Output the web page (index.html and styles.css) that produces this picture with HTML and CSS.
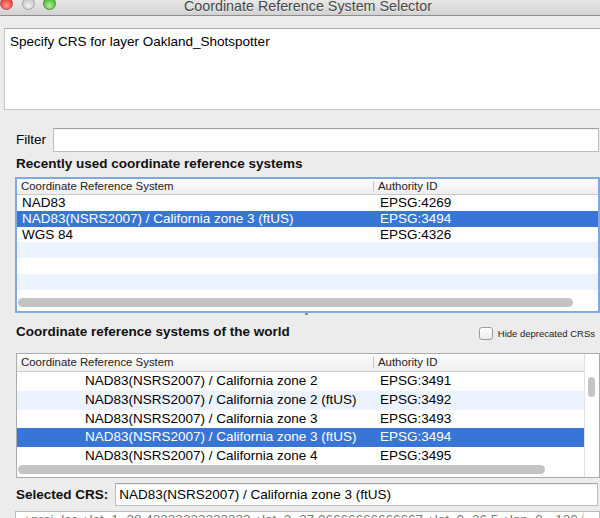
FILE: index.html
```html
<!DOCTYPE html>
<html>
<head>
<meta charset="utf-8">
<title>Coordinate Reference System Selector</title>
<link rel="stylesheet" href="styles.css">
</head>
<body>
<div class="window">
  <div class="titlebar">
    <div class="lights">
      <span class="light red"></span>
      <span class="light grey"></span>
      <span class="light green"></span>
    </div>
    <div class="title">Coordinate Reference System Selector</div>
  </div>

  <div class="desc">Specify CRS for layer Oakland_Shotspotter</div>

  <div class="content">
    <div class="filter-row">
      <span class="label">Filter</span>
      <div class="field"></div>
    </div>

    <div class="heading recent-heading">Recently used coordinate reference systems</div>

    <div class="table recent">
      <div class="thead">
        <span class="h1">Coordinate Reference System</span>
        <span class="sep"></span>
        <span class="h2">Authority ID</span>
      </div>
      <div class="tbody">
        <div class="row"><span class="c1">NAD83</span><span class="c2">EPSG:4269</span></div>
        <div class="row sel"><span class="c1">NAD83(NSRS2007) / California zone 3 (ftUS)</span><span class="c2">EPSG:3494</span></div>
        <div class="row"><span class="c1">WGS 84</span><span class="c2">EPSG:4326</span></div>
        <div class="row alt"></div>
        <div class="row"></div>
        <div class="row alt"></div>
        <div class="row"></div>
      </div>
      <div class="hscroll"><div class="thumb"></div></div>
    </div>

    <div class="splitter"></div>

    <div class="world-head">
      <div class="heading">Coordinate reference systems of the world</div>
      <div class="check"><span class="box"></span><span class="check-label">Hide deprecated CRSs</span></div>
    </div>

    <div class="table world">
      <div class="thead">
        <span class="h1">Coordinate Reference System</span>
        <span class="sep"></span>
        <span class="h2">Authority ID</span>
      </div>
      <div class="tbody">
        <div class="row"><span class="c1">NAD83(NSRS2007) / California zone 2</span><span class="c2">EPSG:3491</span></div>
        <div class="row alt"><span class="c1">NAD83(NSRS2007) / California zone 2 (ftUS)</span><span class="c2">EPSG:3492</span></div>
        <div class="row"><span class="c1">NAD83(NSRS2007) / California zone 3</span><span class="c2">EPSG:3493</span></div>
        <div class="row sel"><span class="c1">NAD83(NSRS2007) / California zone 3 (ftUS)</span><span class="c2">EPSG:3494</span></div>
        <div class="row"><span class="c1">NAD83(NSRS2007) / California zone 4</span><span class="c2">EPSG:3495</span></div>
      </div>
      <div class="hscroll"><div class="thumb"></div></div>
      <div class="vscroll"><div class="thumb"></div></div>
      <div class="corner"></div>
    </div>

    <div class="sel-row">
      <span class="heading sel-label">Selected CRS:</span>
      <div class="field sel-field">NAD83(NSRS2007) / California zone 3 (ftUS)</div>
    </div>

    <div class="proj">
      <div class="proj-text">+proj=lcc +lat_1=38.43333333333333 +lat_2=37.06666666666667 +lat_0=36.5 +lon_0=-120.5 +x_0=2000000.0001016 +y_0=500000.0001016001 +ellps=GRS80 +towgs84=0,0,0,0,0,0,0 +units=us-ft +no_defs</div>
      <div class="proj-scroll"></div>
    </div>
  </div>
</div>
</body>
</html>
```

FILE: styles.css
```css
body {
  margin: 0;
  background: #ececec;
  font-family: "Liberation Sans", Arial, sans-serif;
  color: #000;
}

.window {
  width: 600px;
  height: 518px;
  overflow: hidden;
  background: #ececec;
}

/* title bar */
.titlebar {
  height: 15px;
  border-bottom: 1px solid #8e8e8e;
  background: linear-gradient(#e8e8e8, #d2d2d2);
  display: flex;
  align-items: flex-start;
  overflow: hidden;
}

.lights {
  display: flex;
  margin-top: -3px;
}

.light {
  width: 13px;
  height: 13px;
  border-radius: 50%;
  box-sizing: border-box;
}

.red {
  background: radial-gradient(circle at 50% 70%, #ff9a92 0%, #f0544d 55%, #d3403a 100%);
  border: 1px solid #b9403b;
}

.grey {
  margin-left: 9px;
  background: radial-gradient(circle at 50% 70%, #f2f2f2 0%, #d2d2d2 55%, #b8b8b8 100%);
  border: 1px solid #a4a4a4;
}

.green {
  margin-left: 8px;
  background: radial-gradient(circle at 50% 70%, #b6f09a 0%, #67c64b 55%, #4aa633 100%);
  border: 1px solid #3d932b;
}

.title {
  margin-left: 128px;
  font-size: 14.3px;
  line-height: 12px;
  color: #484848;
  white-space: nowrap;
  text-shadow: 0 1px 0 rgba(255, 255, 255, 0.5);
}

/* description box */
.desc {
  margin: 12px 0 0 4px;
  width: 620px;
  height: 82px;
  box-sizing: border-box;
  padding: 5px 5px;
  background: #fff;
  border: 1px solid #c4c4c4;
  border-top-color: #acacac;
  font-size: 13.5px;
  line-height: 16px;
  white-space: nowrap;
}

.content {
  padding-left: 15px;
}

/* filter */
.filter-row {
  display: flex;
  align-items: center;
  margin-top: 18px;
  height: 24px;
}

.label {
  margin-left: 1px;
  font-size: 13.5px;
  line-height: 16px;
}

.field {
  flex: 1;
  height: 24px;
  margin-left: 7px;
  margin-right: 1px;
  box-sizing: border-box;
  background: #fff;
  border: 1px solid #bcbcbc;
  border-top-color: #a2a2a2;
  box-shadow: inset 0 1px 1px rgba(0, 0, 0, 0.06);
}

.heading {
  font-weight: bold;
  font-size: 13.5px;
  line-height: 16px;
  color: #111;
  white-space: nowrap;
}

.recent-heading {
  margin: 4px 0 0 1px;
}

/* tables */
.table {
  box-sizing: border-box;
  background: #fff;
  overflow: hidden;
}

.recent {
  margin-top: 5px;
  height: 136px;
  border: 2px solid #80a9e3;
  display: flex;
  flex-direction: column;
}

.thead {
  display: flex;
  height: 16px;
  box-sizing: border-box;
  border-bottom: 1px solid #cbcbcb;
  background: linear-gradient(#fdfdfd, #eeeeee);
  font-size: 11.4px;
  line-height: 15px;
  color: #222;
  white-space: nowrap;
}

.thead .h1 {
  width: 356px;
  padding-left: 4px;
  box-sizing: border-box;
}

.thead .sep {
  width: 1px;
  background: #c6c6c6;
  margin: 2px 0 3px;
}

.thead .h2 {
  padding-left: 4px;
}

.tbody {
  overflow: hidden;
}

.recent .tbody {
  height: 100px;
}

.row {
  display: flex;
  height: 15.8px;
  line-height: 15.8px;
  font-size: 13.5px;
  white-space: nowrap;
}

.row .c1 {
  width: 356px;
  flex: none;
  padding-left: 5px;
  box-sizing: border-box;
}

.row .c2 {
  padding-left: 7px;
}

.alt {
  background: #edf3fe;
}

.sel {
  background: #3875d7;
  color: #fff;
}

.hscroll {
  height: 16px;
  box-sizing: border-box;
  padding: 3px 0 0 1px;
  background: #fff;
}

.hscroll .thumb {
  width: 555px;
  height: 9px;
  border-radius: 5px;
  background: #c4c4c4;
}

/* splitter handle */
.splitter {
  height: 0;
  position: relative;
}

.splitter::after {
  content: "";
  position: absolute;
  left: 290px;
  top: 0;
  width: 3px;
  height: 2px;
  background: #8a8a8a;
}

/* world heading */
.world-head {
  display: flex;
  align-items: center;
  justify-content: space-between;
  margin-top: 11px;
  height: 16px;
  padding: 0 5px 0 1px;
}

.check {
  display: flex;
  align-items: center;
  margin-top: 3px;
}

.box {
  width: 14px;
  height: 13px;
  box-sizing: border-box;
  border: 1px solid #9c9c9c;
  border-radius: 3px;
  background: linear-gradient(#ffffff, #ececec);
  margin-right: 5px;
}

.check-label {
  font-size: 9.5px;
  line-height: 12px;
  color: #222;
  white-space: nowrap;
}

/* world table */
.world {
  margin: 13px 0 0 1px;
  height: 125px;
  border: 1px solid #acacac;
  display: grid;
  grid-template-columns: 1fr 15px;
  grid-template-rows: 18px 91px 14px;
}

.world .thead {
  grid-row: 1;
  grid-column: 1;
  height: 18px;
  line-height: 17px;
}

.world .tbody {
  grid-row: 2;
  grid-column: 1;
}

.world .row {
  height: 18.75px;
  line-height: 18.75px;
}

.world .row .c1 {
  padding-left: 68px;
}

.world .hscroll {
  grid-row: 3;
  grid-column: 1;
  height: 14px;
  padding-top: 2px;
}

.world .hscroll .thumb {
  width: 527px;
}

.vscroll {
  grid-row: 1 / 3;
  grid-column: 2;
  border-left: 1px solid #e0e0e0;
  padding: 23px 0 0 3px;
  background: #fff;
}

.vscroll .thumb {
  width: 7px;
  height: 20px;
  border-radius: 4px;
  background: #c4c4c4;
}

.corner {
  grid-row: 3;
  grid-column: 2;
  border-left: 1px solid #e0e0e0;
  background: #fff;
}

/* selected crs */
.sel-row {
  display: flex;
  align-items: center;
  margin-top: 5px;
  height: 23px;
}

.sel-label {
  margin-left: 1px;
}

.sel-field {
  height: 23px;
  margin-right: 2px;
  padding-left: 3px;
  font-size: 13.5px;
  line-height: 21px;
  white-space: nowrap;
  overflow: hidden;
}

/* proj text box */
.proj {
  margin-top: 5px;
  height: 40px;
  box-sizing: border-box;
  border: 1px solid #bcbcbc;
  background: #fff;
  display: flex;
}

.proj-text {
  flex: 1;
  overflow: hidden;
  padding-left: 7px;
  font-size: 13.5px;
  line-height: 16px;
  color: #7a7a7a;
  white-space: nowrap;
}

.proj-scroll {
  width: 15px;
  border-left: 1px solid #e0e0e0;
}
```
